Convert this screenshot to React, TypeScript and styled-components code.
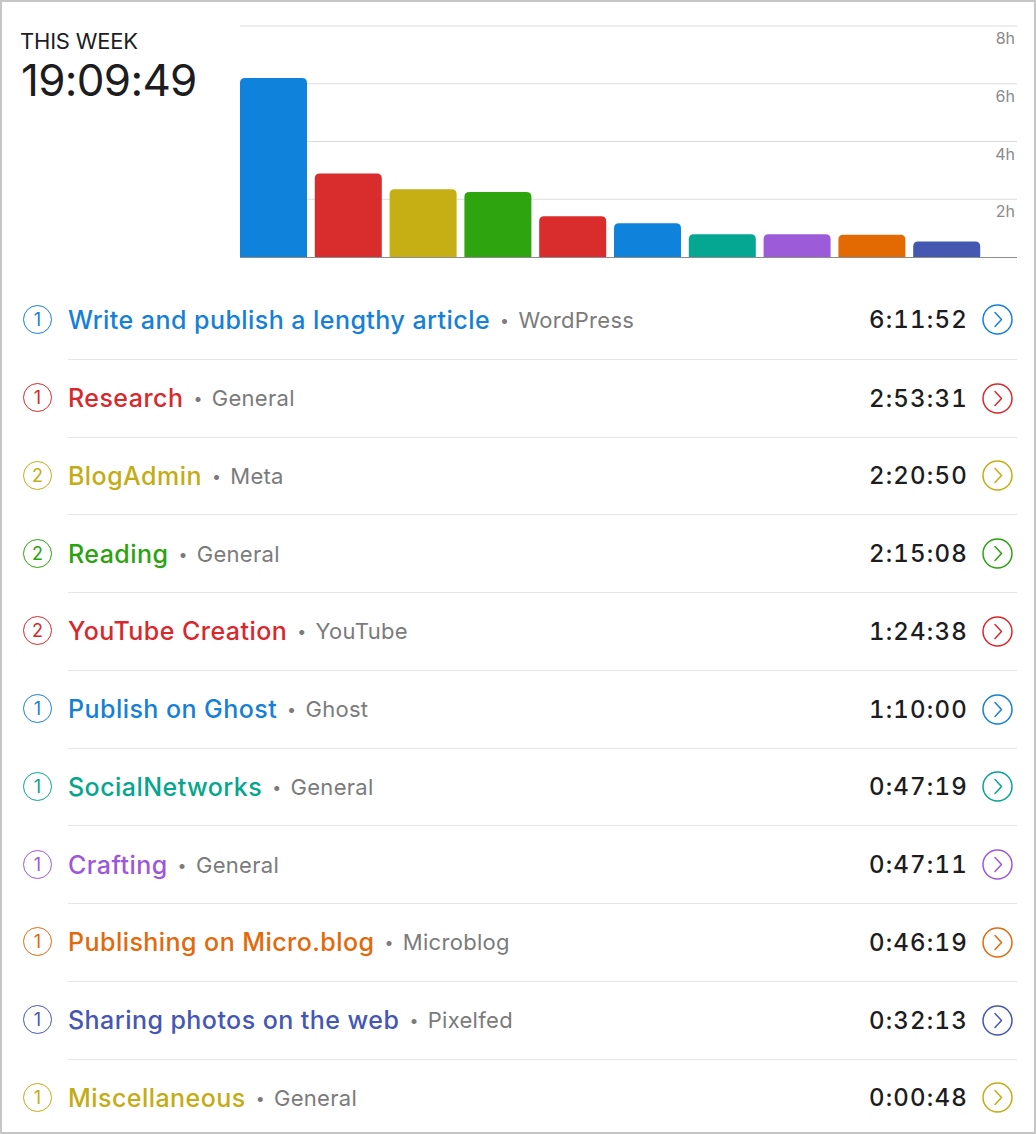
import React from 'react';
import styled, { createGlobalStyle } from 'styled-components';

const GlobalStyle = createGlobalStyle`
  html, body {
    margin: 0;
    padding: 0;
    background: #ffffff;
  }
  body {
    font-family: Inter, "Liberation Sans", Arial, sans-serif;
    color: #1d1d1f;
  }
`;

const Frame = styled.div`
  width: 1036px;
  height: 1134px;
  box-sizing: border-box;
  border: 2px solid #c6c6c6;
  padding: 18px 17px 0 18px;
  overflow: hidden;
  background: #ffffff;
`;

const Header = styled.div`
  display: flex;
  align-items: flex-start;
  margin-bottom: 21px;
`;

const Summary = styled.div`
  width: 220px;
  flex-shrink: 0;
  padding-top: 8px;
`;

const Label = styled.div`
  font-size: 22px;
  line-height: 26px;
  letter-spacing: -0.2px;
  color: #1d1d1f;
`;

const Total = styled.div`
  font-size: 44px;
  line-height: 52px;
  letter-spacing: -0.7px;
  margin-left: 1px;
  color: #1d1d1f;
`;

const ChartBox = styled.div`
  flex: 1;
  height: 240px;
`;

const List = styled.div`
  display: flex;
  flex-direction: column;
`;

const Row = styled.div`
  display: flex;
  align-items: stretch;
  height: 77.75px;
`;

const IconCell = styled.div`
  width: 48px;
  flex-shrink: 0;
  display: flex;
  align-items: center;
`;

const Badge = styled.div<{ $color: string }>`
  width: 27px;
  height: 27px;
  margin-left: 3px;
  border-radius: 50%;
  border: 1.5px solid ${p => p.$color};
  color: ${p => p.$color};
  display: flex;
  align-items: center;
  justify-content: center;
  font-size: 18px;
  font-weight: 400;
`;

const Body = styled.div<{ $first: boolean }>`
  flex: 1;
  display: flex;
  align-items: center;
  border-top: ${p => (p.$first ? 'none' : '1px solid #e6e6e6')};
  min-width: 0;
`;

const Title = styled.span<{ $color: string }>`
  color: ${p => p.$color};
  font-size: 25px;
  font-weight: 500;
  letter-spacing: 0.45px;
  white-space: nowrap;
`;

const Project = styled.span`
  color: #7b7b7b;
  font-size: 22px;
  letter-spacing: 0.3px;
  margin-left: 10px;
  white-space: nowrap;
  flex: 1;
`;

const Dot = styled.span`
  margin-right: 9px;
  font-size: 16px;
  position: relative;
  top: -2px;
`;

const Time = styled.span`
  font-size: 24px;
  font-weight: 500;
  color: #1d1d1f;
  letter-spacing: 1.2px;
  font-variant-numeric: tabular-nums;
`;

const Chevron = styled.svg`
  width: 31px;
  height: 31px;
  margin-left: 14px;
  margin-right: 4px;
  flex-shrink: 0;
`;

const tasks = [
  { n: 1, title: 'Write and publish a lengthy article', project: 'WordPress', time: '6:11:52', color: '#1580d8' },
  { n: 1, title: 'Research', project: 'General', time: '2:53:31', color: '#d9282c' },
  { n: 2, title: 'BlogAdmin', project: 'Meta', time: '2:20:50', color: '#c4ac14' },
  { n: 2, title: 'Reading', project: 'General', time: '2:15:08', color: '#2ba30e' },
  { n: 2, title: 'YouTube Creation', project: 'YouTube', time: '1:24:38', color: '#d9282c' },
  { n: 1, title: 'Publish on Ghost', project: 'Ghost', time: '1:10:00', color: '#1580d8' },
  { n: 1, title: 'SocialNetworks', project: 'General', time: '0:47:19', color: '#05a68f' },
  { n: 1, title: 'Crafting', project: 'General', time: '0:47:11', color: '#9d58da' },
  { n: 1, title: 'Publishing on Micro.blog', project: 'Microblog', time: '0:46:19', color: '#e3690a' },
  { n: 1, title: 'Sharing photos on the web', project: 'Pixelfed', time: '0:32:13', color: '#4557b3' },
  { n: 1, title: 'Miscellaneous', project: 'General', time: '0:00:48', color: '#c4ac14' },
];

const barColors = ['#0f83dc', '#d92c2d', '#c6ae15', '#2ea50e', '#d92c2d', '#0f83dc', '#05a692', '#9c5bd9', '#e36a02', '#4458b2'];

const toHours = (t: string) => {
  const [h, m, s] = t.split(':').map(Number);
  return h + m / 60 + s / 3600;
};

const WeekChart: React.FC = () => {
  const W = 777;
  const base = 237;
  const step = 57.75;
  const perHour = step / 2;
  const barW = 67;
  const pitch = 74.8;
  const r = 5;
  const grid = [8, 6, 4, 2];

  return (
    <svg width={W} height={240} viewBox={`0 0 ${W} 240`}>
      {grid.map(h => {
        const y = base - (h / 2) * step;
        return (
          <g key={h}>
            <line x1={0} x2={W} y1={y} y2={y} stroke="#dcdcdc" strokeWidth={1} />
            <text
              x={W - 2}
              y={y + 18}
              textAnchor="end"
              fontSize={16}
              fill="#8a8a8a"
              fontFamily="Inter, 'Liberation Sans', sans-serif"
            >
              {h}h
            </text>
          </g>
        );
      })}
      {tasks.slice(0, 10).map((t, i) => {
        const hgt = toHours(t.time) * perHour;
        const x = i * pitch;
        const top = base - hgt;
        const d = `M${x} ${base} V${top + r} Q${x} ${top} ${x + r} ${top} H${x + barW - r} Q${x + barW} ${top} ${x + barW} ${top + r} V${base} Z`;
        return <path key={i} d={d} fill={barColors[i]} />;
      })}
      <line x1={0} x2={W} y1={base + 0.5} y2={base + 0.5} stroke="#8c8c8c" strokeWidth={1} />
    </svg>
  );
};

const ArrowIcon: React.FC<{ color: string }> = ({ color }) => (
  <Chevron viewBox="0 0 31 31">
    <circle cx={15.5} cy={15.5} r={14.5} fill="none" stroke={color} strokeWidth={1.5} />
    <path d="M13 8.5 L19.5 15.5 L13 22.5" fill="none" stroke={color} strokeWidth={1.5} strokeLinecap="round" strokeLinejoin="round" />
  </Chevron>
);

const App: React.FC = () => (
  <>
    <GlobalStyle />
    <Frame>
      <Header>
        <Summary>
          <Label>THIS WEEK</Label>
          <Total>19:09:49</Total>
        </Summary>
        <ChartBox>
          <WeekChart />
        </ChartBox>
      </Header>
      <List>
        {tasks.map((t, i) => (
          <Row key={t.title}>
            <IconCell>
              <Badge $color={t.color}>{t.n}</Badge>
            </IconCell>
            <Body $first={i === 0}>
              <Title $color={t.color}>{t.title}</Title>
              <Project>
                <Dot>•</Dot>
                {t.project}
              </Project>
              <Time>{t.time}</Time>
              <ArrowIcon color={t.color} />
            </Body>
          </Row>
        ))}
      </List>
    </Frame>
  </>
);

export default App;
